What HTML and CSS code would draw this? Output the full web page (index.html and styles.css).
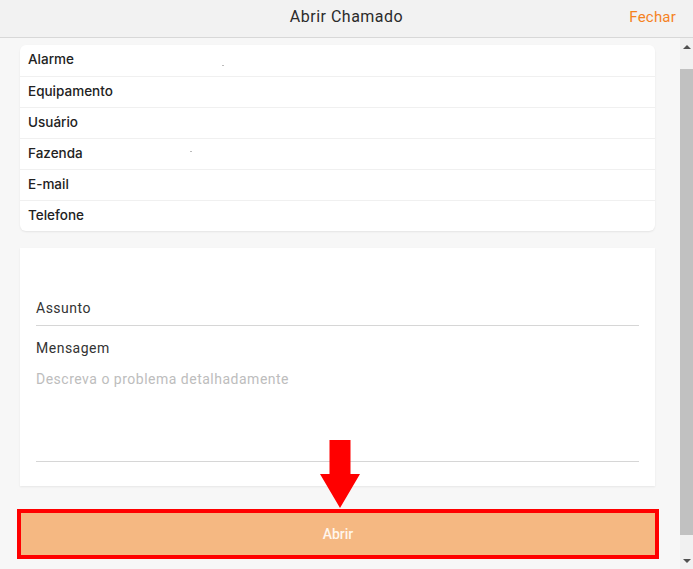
FILE: index.html
```html
<!DOCTYPE html>
<html lang="pt">
<head>
<meta charset="utf-8">
<title>Abrir Chamado</title>
<link rel="stylesheet" href="styles.css">
</head>
<body>
<header class="topbar">
  <span class="spacer"></span>
  <h1 class="title">Abrir Chamado</h1>
  <a class="close">Fechar</a>
</header>
<div class="body-row">
  <main class="content">
    <section class="info-card">
      <div class="info-row">Alarme<span class="mark mark-a"></span></div>
      <div class="info-row">Equipamento</div>
      <div class="info-row">Usuário</div>
      <div class="info-row">Fazenda<span class="mark mark-b"></span></div>
      <div class="info-row">E-mail</div>
      <div class="info-row">Telefone</div>
    </section>
    <section class="form-card">
      <div class="field subject">Assunto</div>
      <div class="field message">
        <div class="label">Mensagem</div>
        <div class="placeholder">Descreva o problema detalhadamente</div>
      </div>
    </section>
    <div class="action">
      <div class="highlight">
        <button class="submit">Abrir</button>
      </div>
      <svg class="arrow" width="44" height="70" viewBox="0 0 44 70">
        <path d="M11.5 1 H32.5 V35 H42 L22 69 L2 35 H11.5 Z" fill="#ff0000"/>
      </svg>
    </div>
  </main>
  <aside class="scrollbar">
    <div class="sb-btn"><span class="tri-up"></span></div>
    <div class="sb-track"><div class="sb-thumb"></div></div>
    <div class="sb-btn"><span class="tri-down"></span></div>
  </aside>
</div>
</body>
</html>
```
FILE: styles.css
```css
* { box-sizing: border-box; }
html, body {
  margin: 0;
  height: 569px;
  overflow: hidden;
}
body {
  font-family: Roboto, "Liberation Sans", sans-serif;
  background: #f7f7f7;
  color: #222;
  display: flex;
  flex-direction: column;
}
.topbar {
  height: 38px;
  flex: none;
  background: #f2f2f2;
  border-bottom: 1px solid #d8d8d8;
  display: grid;
  grid-template-columns: 1fr auto 1fr;
  align-items: center;
  padding: 0 17px 0 17px;
}
.title {
  margin: 0;
  font-size: 16px;
  font-weight: 400;
  color: #2b2b2b;
  letter-spacing: 0.5px;
  padding-bottom: 5px;
}
.close {
  text-align: right;
  font-size: 15px;
  color: #f5821f;
  letter-spacing: 0.2px;
  padding-bottom: 4px;
}
.body-row {
  flex: 1;
  display: flex;
  min-height: 0;
}
.content {
  flex: 1;
  padding: 7px 25px 0 20px;
  display: flex;
  flex-direction: column;
}
.info-card {
  background: #fff;
  border-radius: 6px;
  box-shadow: 0 1px 2px rgba(0,0,0,0.08);
}
.info-row {
  height: 31px;
  padding: 6px 8px 0;
  font-family: Inter, Roboto, sans-serif;
  font-size: 13.5px;
  font-weight: 500;
  color: #222;
  border-top: 1px solid #f0f0f0;
  position: relative;
}
.info-row:first-child { border-top: none; }
.mark {
  position: absolute;
  height: 1px;
  width: 2px;
  background: #bbb;
}
.mark-a { left: 202px; top: 20px; }
.mark-b { left: 170px; top: 12px; }
.form-card {
  margin-top: 17px;
  height: 238px;
  background: #fff;
  box-shadow: 0 1px 2px rgba(0,0,0,0.07);
  padding: 52px 16px 0;
}
.field {
  font-size: 14px;
  color: #333;
}
.subject {
  height: 26px;
  border-bottom: 1px solid #d6d6d6;
  letter-spacing: 0.5px;
}
.message {
  height: 136px;
  border-bottom: 1px solid #d6d6d6;
  padding-top: 14px;
}
.label { letter-spacing: 0.5px; }
.placeholder {
  margin-top: 15px;
  color: #bdbdbd;
  letter-spacing: 0.5px;
}
.action {
  position: relative;
  margin-top: 23px;
  margin-left: -3px;
  margin-right: -4px;
}
.highlight {
  border: 4px solid #ff0000;
  height: 50px;
}
.submit {
  display: block;
  width: 100%;
  height: 100%;
  border: none;
  background: #f5b882;
  color: #fff6ec;
  font-family: Roboto, "Liberation Sans", sans-serif;
  font-size: 14px;
  font-weight: 500;
}
.arrow {
  position: absolute;
  left: 301px;
  top: -70px;
}
.scrollbar {
  width: 13px;
  flex: none;
  background: #f1f1f1;
  display: flex;
  flex-direction: column;
}
.sb-btn {
  height: 17px;
  display: flex;
  align-items: center;
  justify-content: center;
  flex: none;
}
.sb-track {
  flex: 1;
  padding: 14px 0 17px;
}
.sb-thumb {
  height: 100%;
  background: #c1c1c1;
}
.tri-up, .tri-down {
  width: 0;
  height: 0;
  border-left: 4px solid transparent;
  border-right: 4px solid transparent;
}
.tri-up { border-bottom: 4px solid #505050; }
.tri-down { border-top: 4px solid #505050; }
```
